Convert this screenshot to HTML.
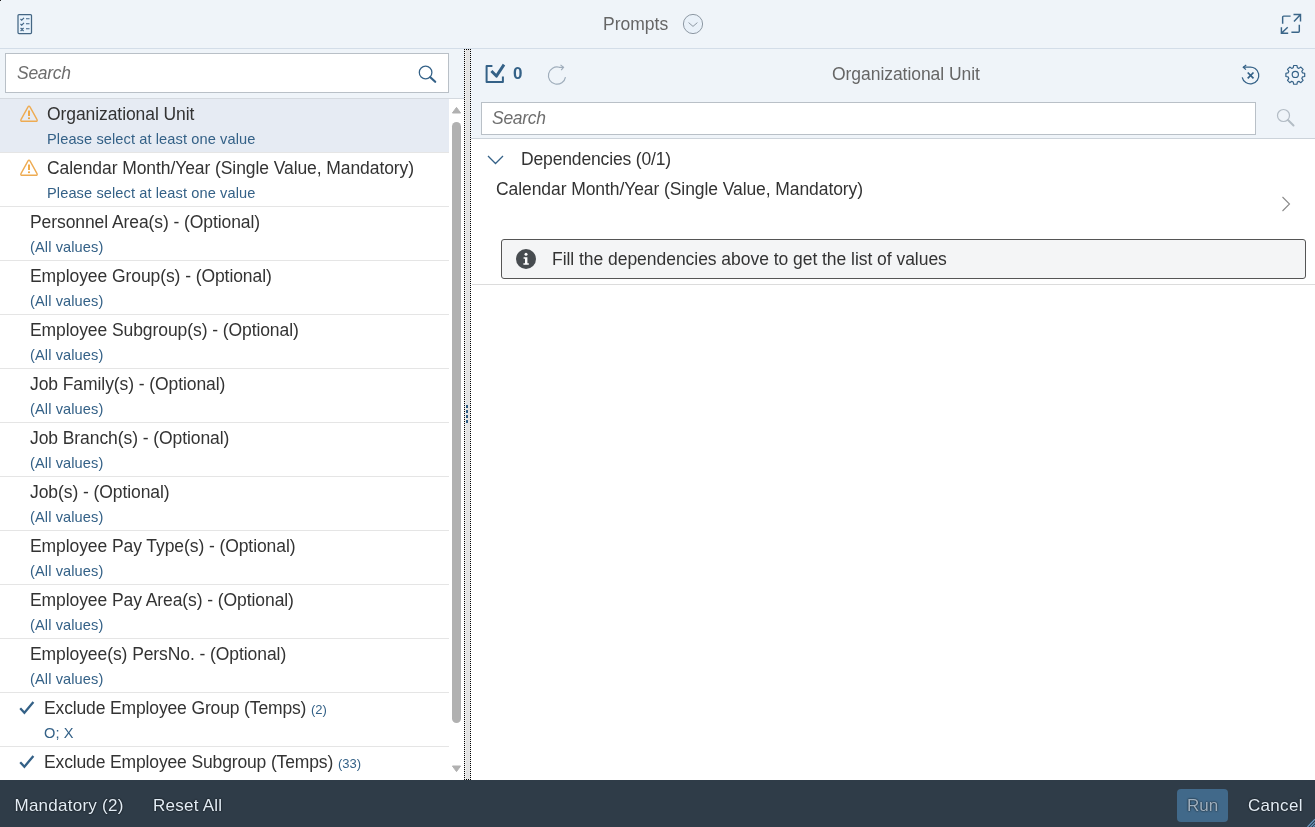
<!DOCTYPE html>
<html><head><meta charset="utf-8">
<style>
*{box-sizing:border-box;margin:0;padding:0}
html,body{width:1315px;height:827px;overflow:hidden;background:#fff}
body{will-change:transform;font-family:"Liberation Sans",sans-serif;color:#333;position:relative;font-size:17px}
.abs{position:absolute}
#hdr{left:0;top:0;width:1315px;height:49px;background:#eff4f9;border-bottom:1px solid #d3dde8}
#hdr .t{left:603px;top:13.5px;font-size:17.5px;color:#666;letter-spacing:0;white-space:nowrap;line-height:20px}
#left{left:0;top:49px;width:464px;height:731px;background:#fff;overflow:hidden}
#lsearch{left:0;top:0;width:464px;height:49px;background:#eff4f9}
.inp{background:#fff;border:1px solid #b9c0c7;position:absolute}
.ph{position:absolute;font-style:italic;color:#6e6e6e;font-size:17.5px;letter-spacing:-.28px;line-height:20px;white-space:nowrap}
.row{position:absolute;left:0;width:449px;height:54px;border-bottom:1px solid #e5e5e5}
.row .t{position:absolute;top:4.5px;font-size:17.5px;line-height:20px;white-space:nowrap;letter-spacing:-.08px;color:#333}
.row .s{position:absolute;top:31px;font-size:14.6px;line-height:18px;white-space:nowrap;color:#346187;letter-spacing:.1px}
.row .c{font-size:13px;color:#346187;letter-spacing:0}
.row.n .t,.row.n .s{left:30px}
.row.w .t,.row.w .s{left:47px}
.row.k .t,.row.k .s{left:44px}
.row.k .t{letter-spacing:-.14px}
#foot{left:0;top:780px;width:1315px;height:47px;background:#2f3c48}
#foot span{position:absolute;top:16px;font-size:17px;line-height:20px;color:#e3edf6;white-space:nowrap;text-shadow:0 0 2px #000}
#right{left:471px;top:49px;width:844px;height:731px;background:#fff}
#rtop{left:0;top:0;width:844px;height:90px;background:#eff4f9;border-bottom:1px solid #ccd3da}
</style></head><body>
<div class="abs" style="left:0;top:0;width:1px;height:1px;background:#222;z-index:5"></div>
<div id="hdr" class="abs">
 <svg class="abs" style="left:16px;top:12px" width="18" height="24" viewBox="0 0 18 24"><rect x="2" y="2.5" width="13.5" height="19" rx="1" fill="#e9f3fc" stroke="#446684" stroke-width="1.25"/><path d="M4.5 7l1.2 1.2L8 5.8M4.5 12l1.2 1.2L8 10.8M4.6 16l3 3M7.6 16l-3 3M10 6.8h3.5M10 11.8h3.5M10 16.8h3.5" fill="none" stroke="#3f6384" stroke-width="1.1"/></svg>
 <div class="abs t">Prompts</div>
 <svg class="abs" style="left:682px;top:13px" width="22" height="22" viewBox="0 0 22 22"><circle cx="11" cy="11" r="9.6" fill="#e9f1f9" stroke="#8d98a3" stroke-width="1"/><path d="M6.6 9.6l4.4 3.8 4.4-3.8" fill="none" stroke="#8d98a3" stroke-width="1"/></svg>
 <svg class="abs" style="left:1280px;top:13px" width="22" height="22" viewBox="0 0 22 22"><g fill="none" stroke="#3a6588" stroke-width="1.45"><path d="M2.65 10.8V4.1Q2.65 3.1 3.65 3.1H10.6"/><path d="M19.3 11.8V18.3Q19.3 19.3 18.3 19.3H11.4"/><path d="M13.5 1.4H20.5V8.6M20.5 1.4L14 8.4"/><path d="M1.4 14.2V20.3H8.2M1.4 20.3L7.7 14.2"/></g></svg>
</div>

<div id="left" class="abs">
 <div id="lsearch" class="abs"></div>
 <div class="inp" style="left:5px;top:4px;width:444px;height:40px"></div>
 <div class="ph" style="left:17px;top:14px">Search</div>
 <svg class="abs" style="left:416px;top:14px" width="24" height="24" viewBox="0 0 24 24"><circle cx="9.6" cy="9.5" r="6.3" fill="none" stroke="#346187" stroke-width="1.25"/><path d="M14.3 14.2l4.9 4.6" stroke="#346187" stroke-width="2.2" stroke-linecap="round"/></svg>
 <div class="abs" style="left:0;top:49px;width:464px;height:1px;background:#d4d9df"></div>
 <div id="list" class="abs" style="left:0;top:50px;width:464px;height:681px;overflow:hidden">
  <div class="row w" style="top:0;background:#e6ebf3"><svg class="abs" style="left:19px;top:5px" width="20" height="20" viewBox="0 0 20 20"><path d="M8.9 3.1Q10 1.2 11.1 3.1L17.9 15.3Q18.9 17.3 16.7 17.3H3.3Q1.1 17.3 2.1 15.3z" fill="none" stroke="#eeab52" stroke-width="1.4" stroke-linejoin="round"/><path d="M10 6.6v5.5" stroke="#f0a236" stroke-width="1.8"/><circle cx="10" cy="14.3" r="1.05" fill="#f0a236"/></svg><div class="t">Organizational Unit</div><div class="s">Please select at least one value</div></div>
  <div class="row w" style="top:54px"><svg class="abs" style="left:19px;top:5px" width="20" height="20" viewBox="0 0 20 20"><path d="M8.9 3.1Q10 1.2 11.1 3.1L17.9 15.3Q18.9 17.3 16.7 17.3H3.3Q1.1 17.3 2.1 15.3z" fill="none" stroke="#eeab52" stroke-width="1.4" stroke-linejoin="round"/><path d="M10 6.6v5.5" stroke="#f0a236" stroke-width="1.8"/><circle cx="10" cy="14.3" r="1.05" fill="#f0a236"/></svg><div class="t">Calendar Month/Year (Single Value, Mandatory)</div><div class="s">Please select at least one value</div></div>
  <div class="row n" style="top:108px"><div class="t">Personnel Area(s) - (Optional)</div><div class="s">(All values)</div></div>
  <div class="row n" style="top:162px"><div class="t">Employee Group(s) - (Optional)</div><div class="s">(All values)</div></div>
  <div class="row n" style="top:216px"><div class="t">Employee Subgroup(s) - (Optional)</div><div class="s">(All values)</div></div>
  <div class="row n" style="top:270px"><div class="t">Job Family(s) - (Optional)</div><div class="s">(All values)</div></div>
  <div class="row n" style="top:324px"><div class="t">Job Branch(s) - (Optional)</div><div class="s">(All values)</div></div>
  <div class="row n" style="top:378px"><div class="t">Job(s) - (Optional)</div><div class="s">(All values)</div></div>
  <div class="row n" style="top:432px"><div class="t">Employee Pay Type(s) - (Optional)</div><div class="s">(All values)</div></div>
  <div class="row n" style="top:486px"><div class="t">Employee Pay Area(s) - (Optional)</div><div class="s">(All values)</div></div>
  <div class="row n" style="top:540px"><div class="t">Employee(s) PersNo. - (Optional)</div><div class="s">(All values)</div></div>
  <div class="row k" style="top:594px"><svg class="abs" style="left:18px;top:7px" width="18" height="16" viewBox="0 0 18 16"><path d="M2.2 8.2l4.2 4.5L15.4 2" fill="none" stroke="#346187" stroke-width="2.3"/></svg><div class="t">Exclude Employee Group (Temps) <span class="c">(2)</span></div><div class="s">O; X</div></div>
  <div class="row k" style="top:648px"><svg class="abs" style="left:18px;top:7px" width="18" height="16" viewBox="0 0 18 16"><path d="M2.2 8.2l4.2 4.5L15.4 2" fill="none" stroke="#346187" stroke-width="2.3"/></svg><div class="t">Exclude Employee Subgroup (Temps) <span class="c">(33)</span></div><div class="s"></div></div>
 </div>
 <!-- scrollbar -->
 <svg class="abs" style="left:451px;top:57px" width="11" height="8" viewBox="0 0 11 8"><path d="M5.5 1.4L9.6 7H1.4z" fill="#b1b1b1" stroke="#b1b1b1" stroke-width="1" stroke-linejoin="round"/></svg>
 <svg class="abs" style="left:451px;top:716px" width="11" height="8" viewBox="0 0 11 8"><path d="M5.5 6.6L9.6 1H1.4z" fill="#b1b1b1" stroke="#b1b1b1" stroke-width="1" stroke-linejoin="round"/></svg>
 <div class="abs" style="left:452px;top:73px;width:9px;height:601px;background:#b1b1b1;border-radius:5px"></div>
</div>

<!-- splitter -->
<div class="abs" style="left:464px;top:49px;width:7px;height:731px;border:1px dotted #000;background:linear-gradient(to right,#f4f4f4 0,#e3e3e3 30%,#e3e3e3 85%,#ededed 100%)">
 <div class="abs" style="left:1px;top:355px;width:2px;height:3px;background:#2f5d84"></div><div class="abs" style="left:1px;top:360px;width:2px;height:3px;background:#2f5d84"></div><div class="abs" style="left:1px;top:365px;width:2px;height:3px;background:#2f5d84"></div><div class="abs" style="left:1px;top:370px;width:2px;height:3px;background:#2f5d84"></div></div>

<div id="right" class="abs">
 <div id="rtop" class="abs"></div>
 <div class="abs" style="left:1px;top:0;width:843px;height:731px">
 <!-- toolbar icons -->
 <svg class="abs" style="left:12px;top:14px" width="24" height="22" viewBox="0 0 24 22"><path d="M8.4 3.1H2.6V19H18.9V13.4" fill="none" stroke="#346187" stroke-width="2" stroke-linejoin="round"/><path d="M7.4 8L12.4 13.1L20 1.6" fill="none" stroke="#346187" stroke-width="2.9" stroke-linejoin="round"/></svg>
 <div class="abs" style="left:41px;top:15px;font-size:17px;line-height:20px;font-weight:bold;color:#346187">0</div>
 <svg class="abs" style="left:74px;top:13px" width="24" height="24" viewBox="0 0 24 24"><g fill="none" stroke="#9fadbb" stroke-width="1.2"><path d="M19.47 15.09A8.6 8.6 0 1 1 13.23 5.29L17.5 5.4"/><path d="M14.5 2.9L17.5 5.4L15.2 8.1"/></g></svg>
 <div class="abs" style="left:360px;top:15px;font-size:17.5px;line-height:20px;color:#666;letter-spacing:-.05px;white-space:nowrap">Organizational Unit</div>
 <svg class="abs" style="left:767px;top:13px" width="24" height="24" viewBox="0 0 24 24"><g fill="none" stroke="#346187"><path d="M4.3 5.2H9.94A8.4 8.4 0 1 1 3.2 15.3" stroke-width="1.25"/><path d="M7.2 2.9L4.3 5.2L6.9 7.6" stroke-width="1.25"/><path d="M8.7 10.5l5.8 5.8M14.5 10.5l-5.8 5.8" stroke-width="1.7"/></g></svg>
 <svg class="abs" style="left:811px;top:13px" width="24" height="24" viewBox="0 0 24 24"><g fill="none" stroke="#346187" stroke-width="1.25" transform="translate(12.3 12.4) scale(.94) translate(-12 -12)"><circle cx="12" cy="12" r="3.3"/><path d="M10.3 2.5h3.4l.5 2.4 1.6.7 2.1-1.4 2.4 2.4-1.4 2.1.7 1.6 2.4.5v3.4l-2.4.5-.7 1.6 1.4 2.1-2.4 2.4-2.1-1.4-1.6.7-.5 2.4h-3.4l-.5-2.4-1.6-.7-2.1 1.4-2.4-2.4 1.4-2.1-.7-1.6-2.4-.5v-3.4l2.4-.5.7-1.6-1.4-2.1 2.4-2.4 2.1 1.4 1.6-.7z" stroke-linejoin="round"/></g></svg>
 <!-- search -->
 <div class="inp" style="left:9px;top:53px;width:775px;height:33px"></div>
 <div class="ph" style="left:20px;top:59px">Search</div>
 <svg class="abs" style="left:803px;top:58px" width="22" height="22" viewBox="0 0 22 22"><circle cx="8.5" cy="8.5" r="6" fill="none" stroke="#b3bcc5" stroke-width="1.2"/><path d="M13 13l5.5 5.5" stroke="#b3bcc5" stroke-width="2" stroke-linecap="round"/></svg>
 <!-- dependencies -->
 <svg class="abs" style="left:14px;top:104px" width="20" height="14" viewBox="0 0 20 14"><path d="M2 3l7.5 7.5L17 3" fill="none" stroke="#346187" stroke-width="1.3"/></svg>
 <div class="abs" style="left:49px;top:99.5px;font-size:17.5px;line-height:20px;letter-spacing:-.15px;white-space:nowrap">Dependencies (0/1)</div>
 <div class="abs" style="left:24px;top:129.5px;font-size:17.5px;line-height:20px;letter-spacing:-.08px;white-space:nowrap">Calendar Month/Year (Single Value, Mandatory)</div>
 <svg class="abs" style="left:808px;top:144.5px" width="12" height="20" viewBox="0 0 12 20"><path d="M2.5 3l7 7-7 7" fill="none" stroke="#8a8a8a" stroke-width="1.1"/></svg>
 <div class="abs" style="left:29px;top:190px;width:805px;height:40px;background:#f4f5f6;border:1px solid #555;border-radius:3px"></div>
 <svg class="abs" style="left:43px;top:199px" width="22" height="22" viewBox="0 0 22 22"><circle cx="11" cy="11" r="10" fill="#474c50"/><circle cx="11" cy="6.2" r="1.5" fill="#fff"/><path d="M8.6 9.2h3.8v6h1.4v1.6H8.4v-1.6h1.6v-4.4H8.6z" fill="#fff"/></svg>
 <div class="abs" style="left:80px;top:200px;font-size:17.5px;line-height:20px;letter-spacing:-.04px;white-space:nowrap">Fill the dependencies above to get the list of values</div>
 <div class="abs" style="left:0;top:235px;width:843px;height:1px;background:#dcdcdc"></div>
 </div>
</div>

<div id="foot" class="abs">
 <span style="left:14.5px;letter-spacing:.25px">Mandatory (2)</span>
 <span style="left:153px;letter-spacing:.25px">Reset All</span>
 <div class="abs" style="left:1177px;top:9px;width:51px;height:33px;background:#41698a;border-radius:4px"></div>
 <span style="left:1187px;color:#9fb0bf">Run</span>
 <span style="left:1248px;letter-spacing:.3px">Cancel</span>
 <svg class="abs" style="left:1306px;top:38px" width="9" height="9" viewBox="0 0 9 9"><path d="M1.5 9L9 1.2M4.5 9L9 4.3M7.3 9L9 7.2" stroke="#6a9bc6" stroke-width="1.1" fill="none"/></svg>
</div>
</body></html>
